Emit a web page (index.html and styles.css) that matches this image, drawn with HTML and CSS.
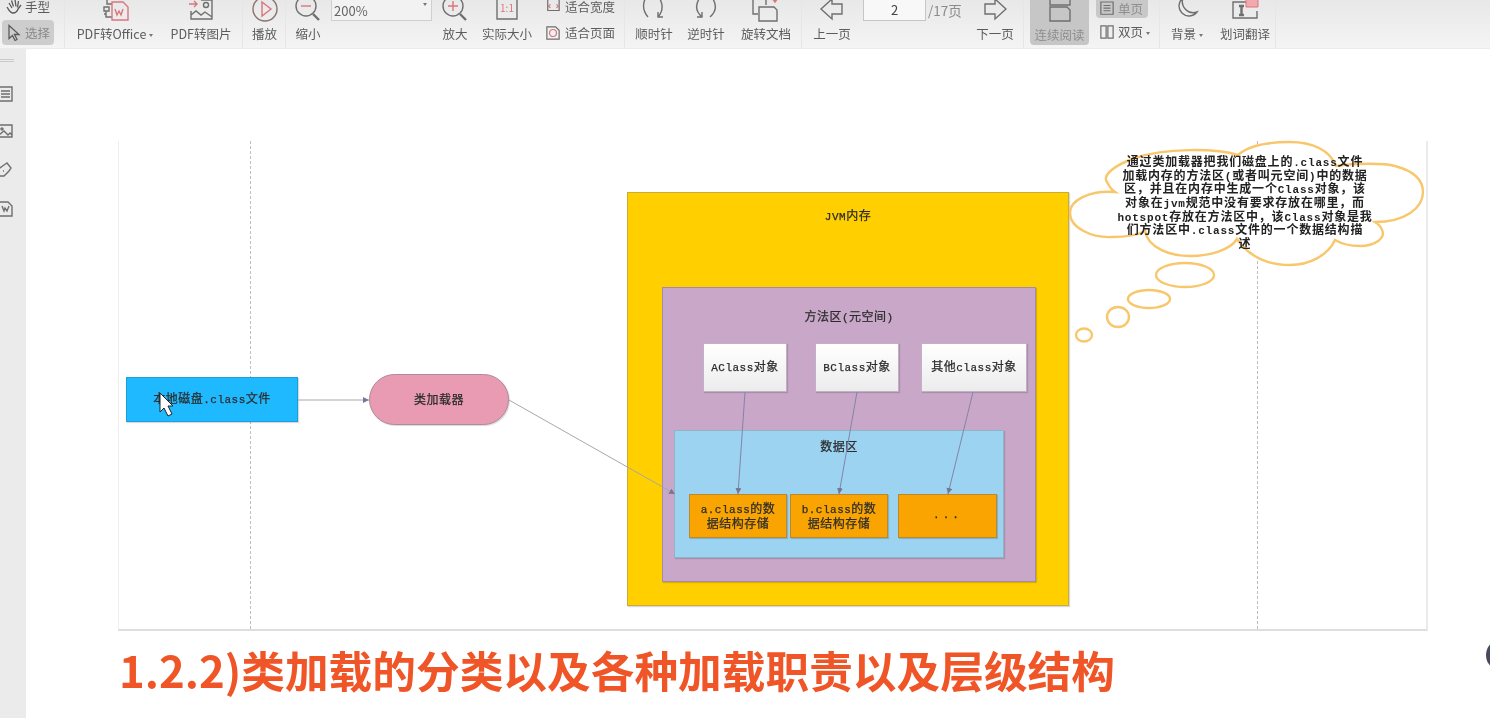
FILE: index.html
```html
<!DOCTYPE html>
<html lang="zh-CN">
<head>
  <meta charset="UTF-8" />
  <title>PDF 阅读器</title>
  <link rel="stylesheet" href="styles.css">
</head>
<body>
  <div class="app">
    <!-- top toolbar, icons run off the top edge like in the recording -->
    <div class="toolbar">
      <div class="group w-65">
        <div class="hand-col">
          <div class="mode-row">
            <svg class="mode-icon" viewBox="0 0 16 16"><path d="M3 4l3 5M5.500 1.500l2 6M9 0.500l1 7M12.500 2l-1 6.500M15 6l-3 4c-1 3-3 4-5 4-3 0-4-3-6-6" /></svg>
            <span>手型</span>
          </div>
          <div class="mode-row is-on">
            <svg class="mode-icon" viewBox="0 0 16 16"><path d="M3 0.500v13l3.500-3 2.500 5 2-1-2.500-5h4.500z" /></svg>
            <span>选择</span>
          </div>
        </div>
      </div>

      <div class="group w-178">
        <div class="tool w-100">
          <svg viewBox="0 0 28 24"><path class="ic" d="M6 -2v8h5M3 9h5v4h-5zM5 13v6h6M3 16h2" /><path class="ic-red" d="M11 4h11l5 5v13h-16zM14 11l2 6 2-4 2 4 2-6" /></svg>
          <span>PDF转Office<i class="caret"></i></span>
        </div>
        <div class="tool w-72">
          <svg viewBox="0 0 26 24"><path class="ic-red" d="M1 6h8M6 3l3 3-3 3" /><path class="ic" d="M13 2h11v19h-21v-8M3 17l5-4 5 4 4-3 7 5" /><circle class="ic" cx="18" cy="7" r="2.500" /></svg>
          <span>PDF转图片</span>
        </div>
      </div>

      <div class="group w-43">
        <div class="tool w-43">
          <svg viewBox="0 0 26 24"><circle class="ic-brown" cx="13" cy="11" r="12" /><path class="ic-red" d="M10 4l9 7-9 7z" /></svg>
          <span>播放</span>
        </div>
      </div>

      <div class="group w-339">
        <div class="tool w-44">
          <svg viewBox="0 0 26 24"><circle class="ic" cx="11" cy="8" r="10" /><path class="ic-thick" d="M18 16l6 6" /><path class="ic-red" d="M6 8h10" /></svg>
          <span>缩小</span>
        </div>
        <div class="zoom-box">200%<i class="caret"></i></div>
        <div class="tool w-46">
          <svg viewBox="0 0 26 24"><circle class="ic" cx="11" cy="8" r="10" /><path class="ic-thick" d="M18 16l6 6" /><path class="ic-red" d="M6 8h10M11 3v10" /></svg>
          <span>放大</span>
        </div>
        <div class="tool w-58">
          <svg viewBox="0 0 24 24"><path class="ic" d="M2 -2h20v23h-20z" /><text class="one-one" x="12" y="14">1:1</text></svg>
          <span>实际大小</span>
        </div>
        <div class="fit-col">
          <div class="fit-row">
            <svg viewBox="0 0 16 16"><path class="ic" d="M2 0v12h13v-12" /><path class="ic-red" d="M5 5l-2 2 2 2M12 5l2 2-2 2" /></svg>
            <span>适合宽度</span>
          </div>
          <div class="fit-row">
            <svg viewBox="0 0 16 16"><path class="ic" d="M1 1h10l4 4v10h-14z" /><circle class="ic-red" cx="8" cy="8" r="4" /></svg>
            <span>适合页面</span>
          </div>
        </div>
      </div>

      <div class="group w-177">
        <div class="tool w-52 first-rotate">
          <svg viewBox="0 0 26 24"><path class="ic" d="M4 1Q0 11 7 19M19 1Q24 11 17 19M17 14v5h5" /></svg>
          <span>顺时针</span>
        </div>
        <div class="tool w-52">
          <svg viewBox="0 0 26 24"><path class="ic" d="M6 1Q0 11 9 19M20 1Q26 11 17 19M9 14v5h-5" /></svg>
          <span>逆时针</span>
        </div>
        <div class="tool w-68">
          <svg viewBox="0 0 28 24"><path class="ic" d="M1 -2v18h5M1 -2h13v9M7 9h15l3 3v11h-18z" /><path class="ic-red" d="M20 0l3 4 3-4M23 -3v7" /></svg>
          <span>旋转文档</span>
        </div>
      </div>

      <div class="group w-222">
        <div class="tool w-60">
          <svg viewBox="0 0 26 24"><path class="ic" d="M2 11l11 -10v5h10v10h-10v5z" /></svg>
          <span>上一页</span>
        </div>
        <div class="page-box">2</div>
        <span class="page-total">/17页</span>
        <div class="tool w-58 next-tool">
          <svg viewBox="0 0 26 24"><path class="ic" d="M24 11l-11 -10v5h-10v10h10v5z" /></svg>
          <span>下一页</span>
        </div>
      </div>

      <div class="group w-136">
        <div class="tool tool-on">
          <svg viewBox="0 0 24 24"><path class="ic" d="M2 -6h20v12h-20zM2 8h17l3 3v11h-20z" /></svg>
          <span>连续阅读</span>
        </div>
        <div class="page-col">
          <div class="page-row is-on">
            <svg viewBox="0 0 16 16"><path class="ic" d="M1 0h14v14h-14zM4 4h8M4 7h8M4 10h8" /></svg>
            <span>单页</span>
          </div>
          <div class="page-row">
            <svg viewBox="0 0 16 16"><path class="ic" d="M1 1h6v14h-6zM9 1h6v14h-6z" /></svg>
            <span>双页<i class="caret"></i></span>
          </div>
        </div>
      </div>

      <div class="group w-116">
        <div class="tool w-54">
          <svg viewBox="0 0 24 24"><path class="ic" d="M8 0a10 10 0 1 0 14 14a11 11 0 0 1 -14 -14z" /></svg>
          <span>背景<i class="caret"></i></span>
        </div>
        <div class="tool w-62">
          <svg viewBox="0 0 28 24"><path class="ic" d="M15 4h-13v16h24v-7" /><path class="ic-thick" d="M8 8h5M8 17h5M10.500 8v9" /><path class="bubble" d="M15 -1h12v10h-12z" /></svg>
          <span>划词翻译</span>
        </div>
      </div>
    </div>

    <div class="body-row">
      <div class="sidebar">
        <div class="grip"></div>
        <svg viewBox="0 0 16 16"><path class="ic" d="M-4 1h16v14h-16zM1 5h9M1 8h9M1 11h9" /></svg>
        <svg viewBox="0 0 16 16"><path class="ic" d="M-4 1h16v12h-16zM-4 13l8-6 4 4 2-2 2 2" /><circle class="ic" cx="2" cy="5" r="1" /></svg>
        <svg viewBox="0 0 16 16"><path class="ic" d="M-3 8l7-5 3-2 4 5-2 3-5 5h-6zM3 9h1" /></svg>
        <svg viewBox="0 0 16 16"><path class="ic" d="M-2 2h10l4 4v10h-14M2 6l2 5 1-3 2 3 2-5" /></svg>
      </div>

      <div class="main">
        <div class="sheet">
          <div class="guide guide-left"></div>
          <div class="guide guide-right"></div>

          <div class="node disk"><span>本地磁盘<span class="lat">.class</span>文件</span></div>
          <div class="node loader">类加载器</div>

          <div class="node jvm"><span><span class="lat">JVM</span>内存</span></div>
          <div class="node method"><span>方法区<span class="lat">(</span>元空间<span class="lat">)</span></span></div>
          <div class="node obj obj-a"><span><span class="lat">AClass</span>对象</span></div>
          <div class="node obj obj-b"><span><span class="lat">BClass</span>对象</span></div>
          <div class="node obj obj-c"><span>其他<span class="lat">class</span>对象</span></div>
          <div class="node data">数据区</div>
          <div class="node store store-a"><span><span class="lat">a.class</span>的数<br>据结构存储</span></div>
          <div class="node store store-b"><span><span class="lat">b.class</span>的数<br>据结构存储</span></div>
          <div class="node store store-c"><span class="lat dots">...</span></div>

          <svg class="overlay" viewBox="118 141 1310 490">
            <defs>
              <marker id="head" markerWidth="7" markerHeight="7" refX="6" refY="3" orient="auto">
                <path d="M0 0l6 3-6 3z" fill="#77778f" />
              </marker>
            </defs>
            <path class="cloud" d="M1115 192C1090 190 1070 200 1070 213C1070 228 1092 238 1112 237C1125 237 1138 235 1145 231C1148 248 1170 256 1190 256C1210 256 1230 250 1237 239C1250 258 1270 265 1290 265C1310 265 1328 255 1335 240C1342 244 1350 246 1360 246C1375 246 1386 238 1382 230C1381 226 1378 224 1375 222C1405 222 1423 208 1423 192C1423 178 1410 170 1395 166C1385 163 1355 163 1336 166C1330 150 1312 142 1290 142C1268 142 1248 146 1238 155C1215 148 1165 148 1135 158C1115 165 1102 175 1107 182C1109 186 1112 190 1115 192Z" />
            <ellipse class="cloud" cx="1185" cy="275" rx="29" ry="12" />
            <ellipse class="cloud" cx="1149" cy="299" rx="21" ry="9" />
            <ellipse class="cloud" cx="1118" cy="317" rx="11" ry="10" />
            <ellipse class="cloud" cx="1084" cy="335" rx="8" ry="6.500" />
            <path class="link" marker-end="url(#head)" d="M298 400H369" />
            <path class="link" marker-end="url(#head)" d="M509 400L675 494" />
            <path class="link link-in" marker-end="url(#head)" d="M745 392L738 494" />
            <path class="link link-in" marker-end="url(#head)" d="M857 392L839 494" />
            <path class="link link-in" marker-end="url(#head)" d="M973 392L948 494" />
            <path class="pointer" d="M160 393v19l4-4 4 8 4-2-4-8h5z" />
          </svg>

          <div class="cloud-text">
            <div>通过类加载器把我们磁盘上的<span class="lat">.class</span>文件</div>
            <div>加载内存的方法区<span class="lat">(</span>或者叫元空间<span class="lat">)</span>中的数据</div>
            <div>区，并且在内存中生成一个<span class="lat">Class</span>对象，该</div>
            <div>对象在<span class="lat">jvm</span>规范中没有要求存放在哪里，而</div>
            <div><span class="lat">hotspot</span>存放在方法区中，该<span class="lat">Class</span>对象是我</div>
            <div>们方法区中<span class="lat">.class</span>文件的一个数据结构描</div>
            <div>述</div>
          </div>
        </div>

        <h1 class="title">1.2.2)类加载的分类以及各种加载职责以及层级结构</h1>
      </div>
    </div>

    <div class="float-btn"></div>
  </div>
</body>
</html>
```

FILE: styles.css
```css
* {
  box-sizing: border-box;
}

html,
body {
  margin: 0;
  height: 100%;
  overflow: hidden;
  background: #fff;
}

.app {
  position: relative;
  height: 718px;
  display: flex;
  flex-direction: column;
  overflow: hidden;
  font-family: "Noto Sans CJK SC", "Noto Sans", sans-serif;
  filter: blur(0.35px);
}

/* toolbar */
.toolbar {
  flex: none;
  height: 49px;
  display: flex;
  align-items: stretch;
  overflow: hidden;
  background: linear-gradient(#e8e8e8, #f4f4f4);
  border-bottom: 1px solid #ececec;
  font-size: 12.500px;
  line-height: 14px;
  color: #5c5c5c;
}

.group {
  flex: none;
  display: flex;
  align-items: stretch;
  border-right: 1px solid #e6e6e6;
}

.w-43 { width: 43px; }
.w-44 { width: 44px; }
.w-46 { width: 46px; }
.w-52 { width: 52px; }
.w-54 { width: 54px; }
.w-58 { width: 58px; }
.w-60 { width: 60px; }
.w-62 { width: 62px; }
.w-65 { width: 65px; }
.w-68 { width: 68px; }
.w-72 { width: 72px; }
.w-100 { width: 100px; }
.w-116 { width: 116px; }
.w-136 { width: 136px; }
.w-177 { width: 177px; }
.w-178 { width: 178px; }
.w-222 { width: 222px; }
.w-339 { width: 339px; }

.tool {
  flex: none;
  display: flex;
  flex-direction: column;
  align-items: center;
  justify-content: flex-end;
  padding-bottom: 7px;
  white-space: nowrap;
}

.tool svg {
  height: 24px;
  margin-bottom: 5px;
  overflow: visible;
}

.ic,
.ic-red,
.ic-brown,
.ic-thick {
  fill: none;
  stroke: #6f6f6f;
  stroke-width: 1.4;
}

.ic-red {
  stroke: #d9767c;
}

.ic-brown {
  stroke: #8a7272;
}

.ic-thick {
  stroke-width: 2.4;
}

.bubble {
  fill: #f2a9ad;
  stroke: #d9767c;
}

.one-one {
  fill: #d9767c;
  font-size: 10px;
  text-anchor: middle;
}

.caret {
  display: inline-block;
  margin-left: 3px;
  vertical-align: middle;
  border: 2.500px solid transparent;
  border-top: 3px solid #777;
  border-bottom: 0;
}

/* hand / select */
.hand-col {
  width: 52px;
  margin-left: 2px;
  display: flex;
  flex-direction: column;
  align-items: stretch;
}

.mode-row {
  height: 14px;
  display: flex;
  align-items: center;
  gap: 3px;
  padding-left: 4px;
}

.mode-row.is-on {
  height: 25px;
  margin-top: 6px;
  background: #cdcdcd;
  border-radius: 4px;
  color: #8a8a8a;
}

.mode-icon {
  width: 16px;
  height: 16px;
  fill: none;
  stroke: #5a5a5a;
  stroke-width: 1.300;
  overflow: visible;
}

/* zoom combo */
.zoom-box {
  flex: none;
  width: 101px;
  height: 21px;
  margin-left: 1px;
  padding: 3px 4px 0 2px;
  display: flex;
  justify-content: space-between;
  border: 1px solid #cfcfcf;
  border-top: 0;
  background: #f2f2f2;
  font-size: 13px;
  line-height: 15px;
  color: #666;
}

.fit-col {
  flex: none;
  margin-left: 10px;
  display: flex;
  flex-direction: column;
}

.fit-row {
  height: 14px;
  display: flex;
  align-items: center;
  gap: 5px;
  margin-bottom: 12px;
}

.fit-row svg {
  width: 14px;
  height: 14px;
  overflow: visible;
}

.first-rotate {
  margin-left: 3px;
}

/* page number */
.page-box {
  flex: none;
  width: 63px;
  height: 21px;
  margin-left: 1px;
  border: 1px solid #c6c6c6;
  border-top: 0;
  background: #f8f8f8;
  text-align: center;
  font-size: 13px;
  line-height: 20px;
  color: #444;
}

.page-total {
  flex: none;
  width: 40px;
  margin-left: 2px;
  padding-top: 3px;
  font-size: 13.500px;
  color: #8c8c8c;
}

.next-tool {
  margin-left: -2px;
}

/* view modes */
.tool-on {
  width: 59px;
  height: 45px;
  margin-left: 6px;
  padding-bottom: 3px;
  background: #c6c6c6;
  border-radius: 0 0 4px 4px;
  color: #8e8e8e;
}

.page-col {
  flex: none;
  margin-left: 7px;
  display: flex;
  flex-direction: column;
}

.page-row {
  width: 52px;
  display: flex;
  align-items: center;
  gap: 4px;
  padding-left: 4px;
}

.page-row svg {
  width: 14px;
  height: 14px;
  overflow: visible;
}

.page-row.is-on {
  height: 18px;
  background: #c8c8c8;
  border-radius: 0 0 4px 4px;
  color: #8e8e8e;
}

.page-row:last-child {
  margin-top: 6px;
  height: 15px;
  white-space: nowrap;
}

/* left rail */
.body-row {
  flex: 1;
  display: flex;
  min-height: 0;
}

.sidebar {
  flex: none;
  width: 26px;
  display: flex;
  flex-direction: column;
  background: #ebebeb;
}

.grip {
  width: 14px;
  height: 3px;
  margin: 10px 0 24px;
  border-top: 1px solid #cacaca;
  border-bottom: 1px solid #cacaca;
}

.sidebar svg {
  flex: none;
  width: 16px;
  height: 16px;
  margin-bottom: 22px;
  overflow: visible;
}

/* document */
.main {
  flex: 1;
  padding: 92px 0 0 92px;
  background: #fff;
}

.sheet {
  position: relative;
  width: 1310px;
  height: 490px;
  border-left: 1px solid #eeeeee;
  border-right: 2px solid #eaeaea;
  border-bottom: 2px solid #dedede;
  font-size: 12px;
  color: #2c2c2c;
}

.guide {
  position: absolute;
  top: 0;
  bottom: 0;
  border-left: 1px dashed #bdbdbd;
}

.guide-left { left: 131px; }
.guide-right { left: 1138px; }

.lat {
  font-family: "Liberation Mono", monospace;
  font-size: 11px;
  line-height: 1;
}

.node {
  position: absolute;
  display: flex;
  align-items: center;
  justify-content: center;
  text-align: center;
  line-height: 13px;
  letter-spacing: 0.5px;
  -webkit-text-stroke: 0.25px #2c2c2c;
  border: 1px solid #a9a9a9;
  box-shadow: 1px 1px 1px rgba(0, 0, 0, 0.15);
}

.disk {
  left: 7px;
  top: 236px;
  width: 172px;
  height: 45px;
  padding-bottom: 2px;
  background: #1fb9ff;
  border-color: #1aa0dc;
}

.loader {
  left: 250px;
  top: 233px;
  width: 140px;
  height: 51px;
  padding-bottom: 2px;
  background: #e89bb3;
  border: 1px solid #b08a9a;
  border-radius: 26px;
}

.jvm {
  left: 508px;
  top: 51px;
  width: 442px;
  height: 414px;
  padding-bottom: 367px;
  background: #ffcf00;
  border-color: #c9ad3a;
}

.method {
  left: 543px;
  top: 146px;
  width: 374px;
  height: 295px;
  padding-bottom: 236px;
  background: #c8a7c9;
  border-color: #a68aa8;
}

.obj {
  top: 202px;
  height: 49px;
  padding-bottom: 2px;
  background: linear-gradient(#fff, #ececec);
  border-color: #c3b0c4;
}

.obj-a { left: 584px; width: 84px; }
.obj-b { left: 696px; width: 84px; }
.obj-c { left: 802px; width: 106px; }

.data {
  left: 555px;
  top: 289px;
  width: 330px;
  height: 128px;
  padding-bottom: 98px;
  background: #9bd3f0;
  border-color: #8eb4c8;
}

.store {
  top: 353px;
  height: 44px;
  padding-bottom: 2px;
  background: #f9a400;
  border-color: #b98a2c;
}

.store-a { left: 570px; width: 98px; }
.store-b { left: 671px; width: 98px; }
.store-c { left: 779px; width: 99px; }

.dots {
  letter-spacing: 3px;
}

.overlay {
  position: absolute;
  left: -1px;
  top: 0;
  width: 1310px;
  height: 490px;
  overflow: visible;
}

.cloud {
  fill: #fff;
  stroke: #f8c76b;
  stroke-width: 2.400;
}

.link {
  fill: none;
  stroke: #a8a8a8;
  stroke-width: 1;
}

.link-in {
  stroke: #8484a6;
}

.pointer {
  fill: #fff;
  stroke: #222;
  stroke-width: 1;
}

.cloud-text {
  position: absolute;
  left: 986px;
  top: 13px;
  width: 280px;
  text-align: center;
  font-size: 12px;
  letter-spacing: 0.8px;
  font-weight: 700;
  color: #222;
}

.cloud-text div {
  height: 13.700px;
  line-height: 13.700px;
  white-space: nowrap;
}

.title {
  margin: 16px 0 0 1px;
  font-size: 43.700px;
  line-height: 44px;
  font-weight: 700;
  white-space: nowrap;
  color: #ef5527;
}

.float-btn {
  position: absolute;
  left: 1486px;
  top: 639px;
  width: 32px;
  height: 32px;
  border-radius: 50%;
  background: #454b5a;
}
```
